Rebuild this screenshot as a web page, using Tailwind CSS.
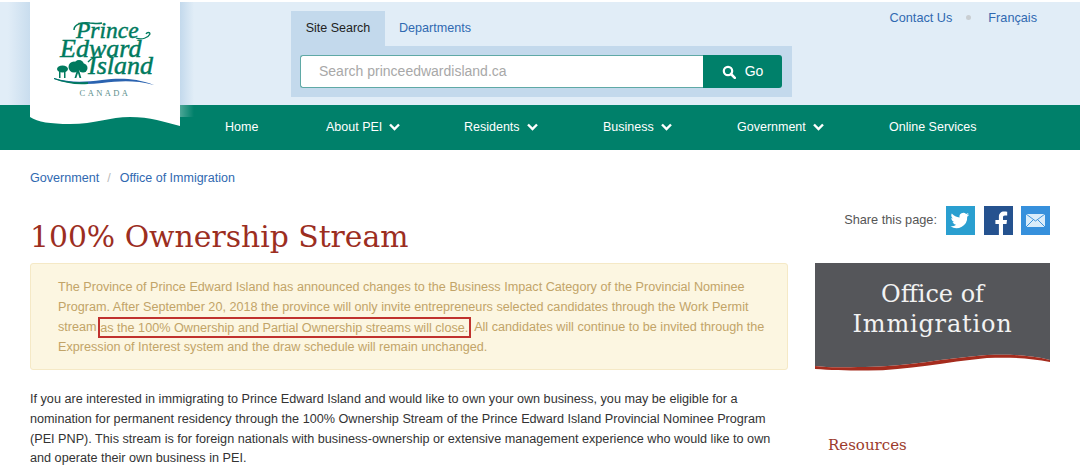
<!DOCTYPE html>
<html><head><meta charset="utf-8"><script src="https://cdn.jsdelivr.net/npm/@tailwindcss/browser@4"></script></head>
<body class="bg-white font-['Liberation_Sans',Arial,sans-serif] text-[12px] text-[#333] overflow-hidden">
<div class="w-[1080px] h-[467px] overflow-hidden relative">
<header class="relative pt-[2px]">
  <div class="h-[103px] bg-[#e1edf7] flex justify-between">
    <div class="ml-[291px] mt-[9px]">
      <div class="flex h-[35px] items-center">
        <span class="bg-[#c3d9ec] h-full w-[94px] flex items-center justify-center text-[#222] text-[12.5px]">Site Search</span>
        <span class="ml-[14px] text-[#3069b1] text-[12.6px]">Departments</span>
      </div>
      <div class="bg-[#c3d9ec] w-[501px] h-[51px] pl-[9px] pr-[10px] py-[9px] flex">
        <div class="flex-1 bg-white border border-[#5fa9a6] rounded-l-[3px] border-r-0 pl-[18px] flex items-center text-[#a8a8a8] text-[14px]">Search princeedwardisland.ca</div>
        <div class="w-[79px] bg-[#00806a] rounded-r-[3px] flex items-center justify-center gap-[9px] text-white text-[14px]">
          <svg width="14" height="14" viewBox="0 0 14 14" fill="none" stroke="#fff"><circle cx="6" cy="6" r="4.2" stroke-width="2.2"/><path d="M9 9l3.800 3.800" stroke-width="2.600" stroke-linecap="round"/></svg>
          <span>Go</span>
        </div>
      </div>
    </div>
    <div class="flex items-start mt-[7px] mr-[43px] text-[#3069b1] text-[12.7px]">
      <span>Contact Us</span>
      <span class="w-[5px] h-[5px] rounded-full bg-[#c9ced2] ml-[14px] mr-[17px] mt-[6px]"></span>
      <span>Français</span>
    </div>
  </div>
  <nav class="h-[45px] bg-[#00806a] flex items-center text-white text-[12.5px] relative">
    <span class="absolute left-[225px]">Home</span>
    <span class="absolute left-[326px] flex items-center gap-[7px]">About PEI <svg width="11" height="8" class="-mt-[2px]" viewBox="0 0 11 8" fill="none" stroke="#fff" stroke-width="2.4"><path d="M1 1.500l4.500 4.500L10 1.500"/></svg></span>
    <span class="absolute left-[464px] flex items-center gap-[7px]">Residents <svg width="11" height="8" class="-mt-[2px]" viewBox="0 0 11 8" fill="none" stroke="#fff" stroke-width="2.4"><path d="M1 1.500l4.500 4.500L10 1.500"/></svg></span>
    <span class="absolute left-[603px] flex items-center gap-[7px]">Business <svg width="11" height="8" class="-mt-[2px]" viewBox="0 0 11 8" fill="none" stroke="#fff" stroke-width="2.4"><path d="M1 1.500l4.500 4.500L10 1.500"/></svg></span>
    <span class="absolute left-[737px] flex items-center gap-[7px]">Government <svg width="11" height="8" class="-mt-[2px]" viewBox="0 0 11 8" fill="none" stroke="#fff" stroke-width="2.4"><path d="M1 1.500l4.500 4.500L10 1.500"/></svg></span>
    <span class="absolute left-[889px]">Online Services</span>
  </nav>
  <div class="absolute left-[8px] top-[2px] w-[22px] h-[103px] bg-gradient-to-r from-transparent to-[#c3d9ec]/80"></div>
  <div class="absolute left-[180px] top-[2px] w-[14px] h-[103px] bg-gradient-to-r from-[#c3d9ec] to-transparent"></div>
  <div class="absolute left-[180px] top-[105px] w-[14px] h-[12px] bg-gradient-to-r from-white/30 to-transparent"></div>
  <div class="absolute left-[30px] top-0 w-[150px] h-[127px]">
    <svg class="absolute inset-0" width="150" height="127" viewBox="0 0 150 127">
      <path d="M0 0H150V126C135 122 120 117 100 117C80 117 65 124 40 124C20 124 8 122 0 117Z" fill="#fff"/>
      <path d="M24 78C40 83 55 82 72 80C90 78 105 78 124 85C105 80 90 81 72 83C55 85 38 84 24 79Z" fill="#2b63b0"/>
      <path d="M24 78C36 82 46 83 58 82L58 84C46 85 34 83 24 79Z" fill="#007a5e"/>
      <g fill="#007a5e"><circle cx="44" cy="67" r="5.500"/><circle cx="49" cy="65" r="5"/><circle cx="53" cy="68" r="4.500"/><path d="M47 70l-2.500 8h1.800l1.700-5 1.500 5h1.800l-2.300-8z"/><ellipse cx="32.500" cy="69" rx="5.500" ry="3.500"/><rect x="29" y="71" width="1.500" height="7"/><rect x="34" y="71" width="1.500" height="7"/></g>
      <g fill="none" stroke="#007a5e"><path d="M44 30C44 24 52 22 60 23C66 23.500 68 24 72 23" stroke-width="1.500"/><path d="M106 38C112 40 118 38 120 34C120 32 117 32 116 34" stroke-width="1.300"/><path d="M58 62C62 57 66 57 72 57" stroke-width="1.300"/></g>
    </svg>
    <div class="absolute left-0 top-[22px] w-[150px] font-['Liberation_Serif',serif] italic text-[#007a5e] text-[26px] [-webkit-text-stroke:0.450px_#007a5e]">
      <div class="pl-[46px] leading-[17.500px] text-[23.500px]">Prince</div>
      <div class="pl-[30px] leading-[17px]">Edward</div>
      <div class="pl-[58px] leading-[17px]">Island</div>
    </div>
    <div class="absolute left-0 w-[150px] top-[87px] text-center font-['Liberation_Serif',serif] text-[8.500px] tracking-[2.400px] text-[#5d8f8c]">CANADA</div>
  </div>
</header>
<main class="px-[30px] relative">
  <div class="pt-[21px] flex items-center text-[12.6px] text-[#3069b1] leading-[14px]"><span>Government</span><span class="text-[#bbb] ml-[8px] mr-[9px]">/</span><span class="text-[12.500px]">Office of Immigration</span></div>
  <div class="flex justify-between">
    <div class="w-[758px]">
      <h1 class="mt-[29px] font-['DejaVu_Serif',serif] text-[#9c2e1f] text-[29.800px] leading-[46px] font-normal">100% Ownership Stream</h1>
      <div class="mt-[3px] h-[107px] bg-[#fcf6e1] border border-[#f5e9c6] rounded-[3px] pl-[27px] pt-[13px] text-[#c2a468] text-[12.650px] leading-[20px]">
        <p>The Province of Prince Edward Island has announced changes to the Business Impact Category of the Provincial Nominee<br>Program. After September 20, 2018 the province will only invite entrepreneurs selected candidates through the Work Permit<br>stream <span class="outline-2 outline-[#c0322e] -outline-offset-2 -ml-[2px] pl-[2px] pr-[3px] py-[3.500px]">as the 100% Ownership and Partial Ownership streams will close.</span> All candidates will continue to be invited through the<br>Expression of Interest system and the draw schedule will remain unchanged.</p>
      </div>
      <p class="mt-[20px] text-[#333] text-[12.650px] leading-[19.800px]">If you are interested in immigrating to Prince Edward Island and would like to own your own business, you may be eligible for a<br>nomination for permanent residency through the 100% Ownership Stream of the Prince Edward Island Provincial Nominee Program<br>(PEI PNP). This stream is for foreign nationals with business-ownership or extensive management experience who would like to own<br>and operate their own business in PEI.</p>
    </div>
    <aside class="w-[235px] pt-[20px]">
      <div class="flex items-center justify-end h-[30px] gap-[9px] text-[12.750px] text-[#555]">
        <span class="-mt-[1px]">Share this page:</span>
        <svg width="29" height="29" viewBox="0 0 29 29"><rect width="29" height="29" fill="#2a9fd0"/><path d="M23 8.600c-.7.3-1.400.5-2.200.6.8-.5 1.400-1.200 1.700-2.100-.7.4-1.600.8-2.400.9a3.800 3.800 0 0 0-6.500 3.500c-3.100-.2-5.900-1.700-7.800-4-1 1.700-.5 3.900 1.200 5.100-.6 0-1.200-.2-1.700-.5 0 1.900 1.300 3.500 3 3.900-.6.2-1.200.2-1.700.1.500 1.500 1.900 2.600 3.600 2.600a7.700 7.700 0 0 1-5.700 1.600 10.800 10.800 0 0 0 16.700-9.600c.8-.5 1.400-1.200 1.900-2z" fill="#fff"/></svg>
        <svg width="29" height="29" viewBox="0 0 29 29"><rect width="29" height="29" fill="#25528f"/><path d="M19 29V18h3.500l.5-4h-4v-2.500c0-1.200.4-2 2-2h2.200V5.800c-.4 0-1.700-.2-3.100-.2-3.100 0-5.200 1.900-5.200 5.300V14h-3.500v4h3.500v11z" fill="#fff"/></svg>
        <svg class="-ml-[1px]" width="29" height="29" viewBox="0 0 29 29"><rect width="29" height="29" fill="#3690dc"/><rect x="5" y="8" width="19" height="13" fill="#d9ecfa"/><path d="M5 8l9.500 7L24 8M5 21l7-7M24 21l-7-7" fill="none" stroke="#3f94dc" stroke-width="1"/></svg>
      </div>
      <div class="mt-[28px] relative h-[110px]">
        <svg class="absolute inset-0" width="235" height="110" viewBox="0 0 235 110"><path d="M0 0H235V97C215 92 195 91 172 92C130 95 90 104 50 104C30 104 15 105 0 103Z" fill="#55565a"/><path d="M0 103C15 105 30 104 50 104C90 104 130 95 172 92C195 91 215 92 235 97V99C215 95 195 94 172 95C130 99 90 108 50 107.500C30 107.500 15 107 0 106Z" fill="#a52c1e"/></svg>
        <div class="relative text-center text-[#f2f2f2] font-['DejaVu_Serif',serif] text-[24px] leading-[30px] pt-[16px]">Office of<br><span class="tracking-[0.8px]">Immigration</span></div>
      </div>
      <div class="mt-[62px] pl-[13px] font-['DejaVu_Serif',serif] text-[#9c3b2c] text-[15px] leading-[20px]">Resources</div>
    </aside>
  </div>
</main>
</div>
</body></html>
